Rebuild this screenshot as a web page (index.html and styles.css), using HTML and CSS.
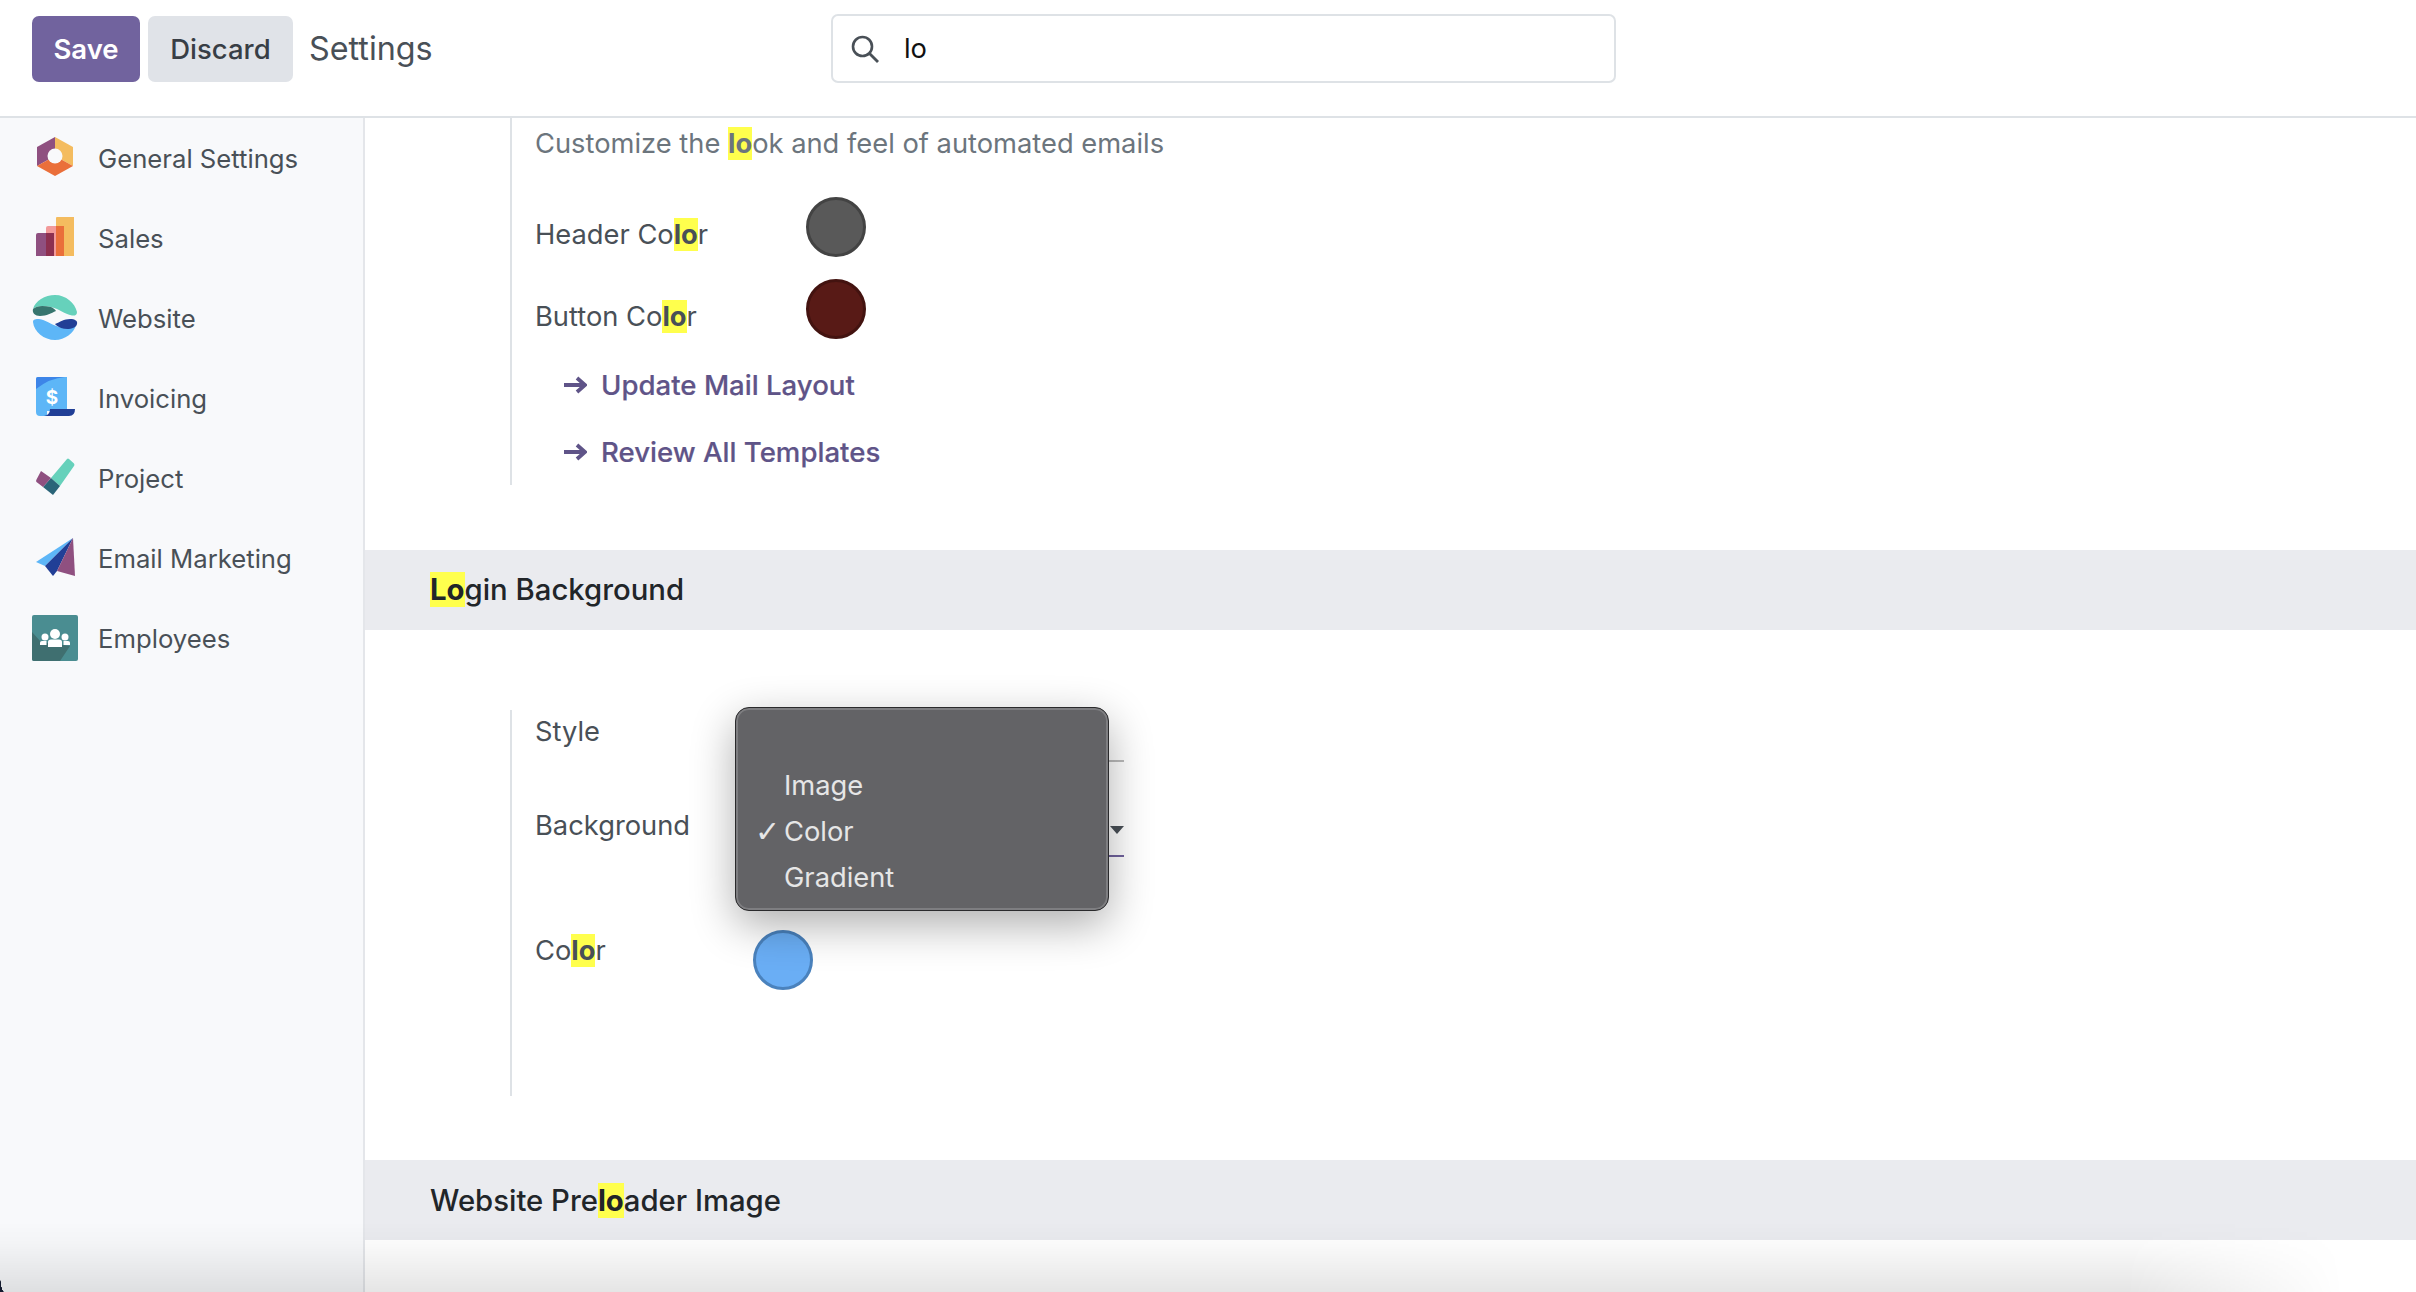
FILE: index.html
```html
<!DOCTYPE html>
<html lang="en">
<head>
  <meta charset="UTF-8">
  <title>Settings</title>
  <link rel="stylesheet" href="styles.css">
</head>
<body>

  <header class="topbar">
    <button class="btn btn-save">Save</button>
    <button class="btn btn-discard">Discard</button>
    <span class="page-title">Settings</span>
    <div class="search">
      <svg class="search-icon" viewBox="0 0 28 28"><circle cx="11.5" cy="11.5" r="9.5" fill="none" stroke="#495057" stroke-width="2.6"/><path d="M18.5 18.5L27 27" stroke="#495057" stroke-width="2.8" fill="none"/></svg>
      <span class="search-text">lo</span>
    </div>
  </header>

  <div class="layout">
    <nav class="sidebar">
      <a class="side-item">
        <svg class="side-icon" viewBox="0 0 46 46">
          <path d="M23 2L5 12V31L23 21Z" fill="#8f5080"/>
          <path d="M23 2L41 12V31L23 21Z" fill="#f4bc5f"/>
          <path d="M5 31L23 41L41 31L23 21Z" fill="#ea6f3a"/>
          <circle cx="23" cy="21" r="7.5" fill="#f8f9fb"/>
        </svg>
        General Settings
      </a>
      <a class="side-item">
        <svg class="side-icon" viewBox="0 0 46 46">
          <path d="M24 3a1 1 0 0 1 1-1H42V41H24Z" fill="#f4bc5f"/>
          <path d="M16 11H32V41H14V13a2 2 0 0 1 2-2Z" fill="#f29a9a"/>
          <rect x="24" y="11" width="8" height="30" fill="#ea6f3a"/>
          <path d="M6 18H22V41H4V20a2 2 0 0 1 2-2Z" fill="#8f5080"/>
          <rect x="14" y="18" width="8" height="23" fill="#8d3050"/>
        </svg>
        Sales
      </a>
      <a class="side-item">
        <svg class="side-icon" viewBox="0 0 46 46">
          <path d="M1 14C3 6 13 0 23 0C34 0 43 8 45 17C45 20 43 21 40 20.500C32 19 28 14 19 12C12 10.500 5 10 1 14Z" fill="#66d1bb"/>
          <path d="M1 14C5 10 12 10.500 19 12C21 13 23 14 24 16C19 18 15 21 8 21C3 21 0 18 1 14Z" fill="#37756e"/>
          <path d="M1 27C1 24 4 24 7 24C14 25 18 29 27 32C32 33.500 40 35 44 30C42 38 33 45 23 45C12 45 2 37 1 27Z" fill="#5db6f7"/>
          <path d="M23 29C28 27 32 24 38 24C43 24 46 26 45 29C44 34 35 35 29 33C26 32 24 30 23 29Z" fill="#213f96"/>
        </svg>
        Website
      </a>
      <a class="side-item">
        <svg class="side-icon" viewBox="0 0 46 46">
          <path d="M4 4a2 2 0 0 1 2-2H35V36H15V41H8a4 4 0 0 1-4-4Z" fill="#5db6f7"/>
          <path d="M4 14V4a2 2 0 0 1 2-2H33Q18 3 4 14Z" fill="#3d85e8"/>
          <path d="M18 34H43Q43 41 37 41H12Q18 40 18 34Z" fill="#213f96"/>
          <text class="dollar" x="20" y="28.500" text-anchor="middle">$</text>
        </svg>
        Invoicing
      </a>
      <a class="side-item">
        <svg class="side-icon" viewBox="0 0 46 46">
          <path d="M35 4Q36 3 37 4L42 8.500Q43 10 42 11L28 31L19 23Z" fill="#66d1bb"/>
          <path d="M19 23L28 31L21 40L11 32Z" fill="#2a6478"/>
          <path d="M9 16L19 23L11 32L4.500 27Q3.500 26 4.500 24.500Z" fill="#8f5080"/>
        </svg>
        Project
      </a>
      <a class="side-item">
        <svg class="side-icon" viewBox="0 0 46 46">
          <path d="M41 3L4 27L13 31Z" fill="#5db6f7"/>
          <path d="M41 3L13 31L21 41L25 36Z" fill="#213f96"/>
          <path d="M41 3L43 41L25 36Z" fill="#8f5080"/>
        </svg>
        Email Marketing
      </a>
      <a class="side-item">
        <svg class="side-icon" viewBox="0 0 46 46">
          <rect width="46" height="46" rx="2" fill="#4a8d91"/>
          <path d="M0 17L9 27L38 31L28 46H2a2 2 0 0 1-2-2Z" fill="#3f6f70"/>
          <circle cx="23" cy="19" r="5" fill="#fff"/>
          <circle cx="13" cy="22" r="3.500" fill="#fff"/>
          <circle cx="33" cy="22" r="3.500" fill="#fff"/>
          <path d="M16 32V27Q16 24.500 19 24.500H27Q30 24.500 30 27V32Z" fill="#fff"/>
          <path d="M8 30V27.500Q8 26 10 26H14.500V30Z" fill="#fff"/>
          <path d="M38 30V27.500Q38 26 36 26H31.500V30Z" fill="#fff"/>
        </svg>
        Employees
      </a>
    </nav>

    <main class="content">
      <section class="block block-mail">
        <p class="desc">Customize the <span class="hl">lo</span>ok and feel of automated emails</p>
        <div class="color-row">
          <span class="field-label">Header Co<span class="hl">lo</span>r</span>
          <span class="swatch swatch-gray"></span>
        </div>
        <div class="color-row">
          <span class="field-label">Button Co<span class="hl">lo</span>r</span>
          <span class="swatch swatch-red"></span>
        </div>
        <a class="link-row">
          <svg class="arrow" viewBox="0 0 24 18"><path d="M1 9H21M14 2L22 9L14 16" fill="none" stroke="#5f5488" stroke-width="3.800"/></svg>
          Update Mail Layout
        </a>
        <a class="link-row">
          <svg class="arrow" viewBox="0 0 24 18"><path d="M1 9H21M14 2L22 9L14 16" fill="none" stroke="#5f5488" stroke-width="3.800"/></svg>
          Review All Templates
        </a>
      </section>

      <h3 class="band"><span><span class="hl">Lo</span>gin Background</span></h3>

      <section class="block block-login">
        <div class="form-row form-row-style">
          <span class="field-label">Style</span>
          <div class="select"></div>
        </div>
        <div class="form-row form-row-bg">
          <span class="field-label">Background</span>
          <div class="select select-active"><span class="caret"></span></div>
        </div>
        <div class="form-row form-row-color">
          <span class="field-label">Co<span class="hl">lo</span>r</span>
          <span class="swatch swatch-blue"></span>
        </div>

        <ul class="popup">
          <li>Image</li>
          <li class="checked">Color</li>
          <li>Gradient</li>
        </ul>
      </section>

      <h3 class="band band-last"><span>Website Pre<span class="hl">lo</span>ader Image</span></h3>
    </main>
  </div>

  <div class="bottom-shade"></div>
  <div class="window-corner"></div>

</body>
</html>
```

FILE: styles.css
```css
* {
  box-sizing: border-box;
}
html, body {
  height: 100%;
}
body {
  margin: 0;
  font-family: Inter, "Liberation Sans", sans-serif;
  font-size: 27.3px;
  color: #495057;
  background: white;
  overflow: hidden;
}

/* top bar */
.topbar {
  display: flex;
  align-items: center;
  height: 118px;
  padding: 0 0 19px 32px;
  border-bottom: 2px solid #dee2e6;
}
.btn {
  height: 66px;
  border: none;
  border-radius: 7px;
  font-family: inherit;
  font-size: 27.5px;
}
.btn-save {
  width: 108px;
  background: #71639e;
  color: white;
  font-weight: 600;
}
.btn-discard {
  width: 145px;
  margin-left: 8px;
  background: #e0e3e8;
  color: #383e45;
  font-weight: 500;
}
.page-title {
  width: 522px;
  margin-left: 16px;
  font-size: 32.3px;
}
.search {
  display: flex;
  align-items: center;
  width: 785px;
  height: 69px;
  padding-left: 18px;
  border: 2px solid #dee2e6;
  border-radius: 7px;
}
.search-icon {
  width: 28px;
  height: 28px;
}
.search-text {
  margin-left: 25px;
  color: #111;
}

/* sidebar */
.layout {
  display: flex;
  height: calc(100% - 118px);
}
.sidebar {
  flex: none;
  width: 365px;
  background: #f8f9fb;
  border-right: 2px solid #e4e6ea;
}
.side-item {
  display: flex;
  align-items: center;
  height: 80px;
  padding-left: 32px;
  font-size: 25.7px;
}
.side-icon {
  width: 46px;
  height: 46px;
  margin-right: 20px;
}
.dollar {
  font-family: Inter, sans-serif;
  font-size: 19px;
  font-weight: 700;
  fill: white;
}

/* settings */
.content {
  flex: 1;
}
.hl {
  background: #ffff4d;
  font-weight: 700;
}
.block {
  position: relative;
  margin-left: 145px;
  padding-left: 23px;
  border-left: 2px solid #dee2e6;
}
.block-mail {
  height: 367px;
  padding-top: 10px;
}
.desc {
  margin: 0 0 37px;
  line-height: 32px;
  color: #6c757d;
}
.field-label {
  line-height: 33px;
}
.color-row {
  display: flex;
  align-items: flex-start;
  margin-bottom: 22px;
}
.color-row .field-label {
  width: 271px;
  margin-top: 21px;
}
.swatch {
  width: 60px;
  height: 60px;
  border-radius: 50%;
  border: 3px solid;
}
.swatch-gray {
  background: #595959;
  border-color: #434343;
}
.swatch-red {
  background: #581a16;
  border-color: #431310;
}
.swatch-blue {
  background: #6aaef5;
  border-color: #4a82bd;
}
.link-row {
  display: flex;
  align-items: center;
  height: 32px;
  margin: 30px 0 35px 28px;
  color: #5f5488;
  font-size: 27.6px;
  font-weight: 500;
  -webkit-text-stroke: 0.2px #5f5488;
}
.arrow {
  width: 24px;
  height: 18px;
  margin-right: 14px;
}
.band {
  display: flex;
  align-items: center;
  height: 80px;
  margin: 65px 0 80px;
  padding: 0 0 2px 65px;
  background: #eaebef;
  color: #212529;
  font-size: 29.3px;
  font-weight: 500;
}
.band-last {
  margin: 64px 0 0;
  padding-bottom: 0;
}
.block-login {
  height: 386px;
}
.form-row {
  display: flex;
  align-items: flex-start;
}
.form-row .field-label {
  width: 218px;
}
.form-row-style {
  height: 52px;
  padding-top: 5px;
}
.form-row-bg {
  height: 94px;
  padding-top: 47px;
}
.form-row-color {
  padding-top: 74px;
}
.form-row-color .field-label {
  margin-top: 4px;
}
.select {
  position: relative;
  width: 371px;
  height: 47px;
  border-bottom: 2px solid #bbb;
}
.form-row-bg .select {
  height: 48px;
}
.select-active {
  border-bottom-color: #71639e;
}
.caret {
  position: absolute;
  right: 0;
  top: 17px;
  border-top: 8px solid #495057;
  border-left: 7px solid transparent;
  border-right: 7px solid transparent;
}

/* native select menu, open over the form */
.popup {
  position: absolute;
  left: 223px;
  top: -3px;
  width: 374px;
  height: 204px;
  margin: 0;
  padding: 55px 0 0 48px;
  list-style: none;
  background: #636366;
  border: 1px solid #2a2a2c;
  border-radius: 14px;
  box-shadow: inset 0 0 0 2px #7e7e81, 0 14px 44px rgba(0,0,0,0.32);
  color: #e6e6e6;
}
.popup li {
  position: relative;
  height: 46px;
  line-height: 46px;
}
.popup .checked::before {
  content: "✓";
  position: absolute;
  left: -29px;
  font-family: "DejaVu Sans", sans-serif;
  font-size: 30px;
}

/* window edge */
.bottom-shade {
  position: absolute;
  left: 0;
  right: 0;
  bottom: 0;
  height: 70px;
  pointer-events: none;
  background: linear-gradient(to bottom, rgba(0,0,0,0), rgba(0,0,0,0.02) 30%, rgba(0,0,0,0.1));
  -webkit-mask-image: linear-gradient(to right, #000 88%, transparent 97%);
  mask-image: linear-gradient(to right, #000 88%, transparent 97%);
}
.window-corner {
  position: absolute;
  left: 0;
  bottom: 0;
  width: 4px;
  height: 20px;
  background: radial-gradient(ellipse 4px 20px at 100% 0, transparent 96%, #141a2e 100%);
}
```
